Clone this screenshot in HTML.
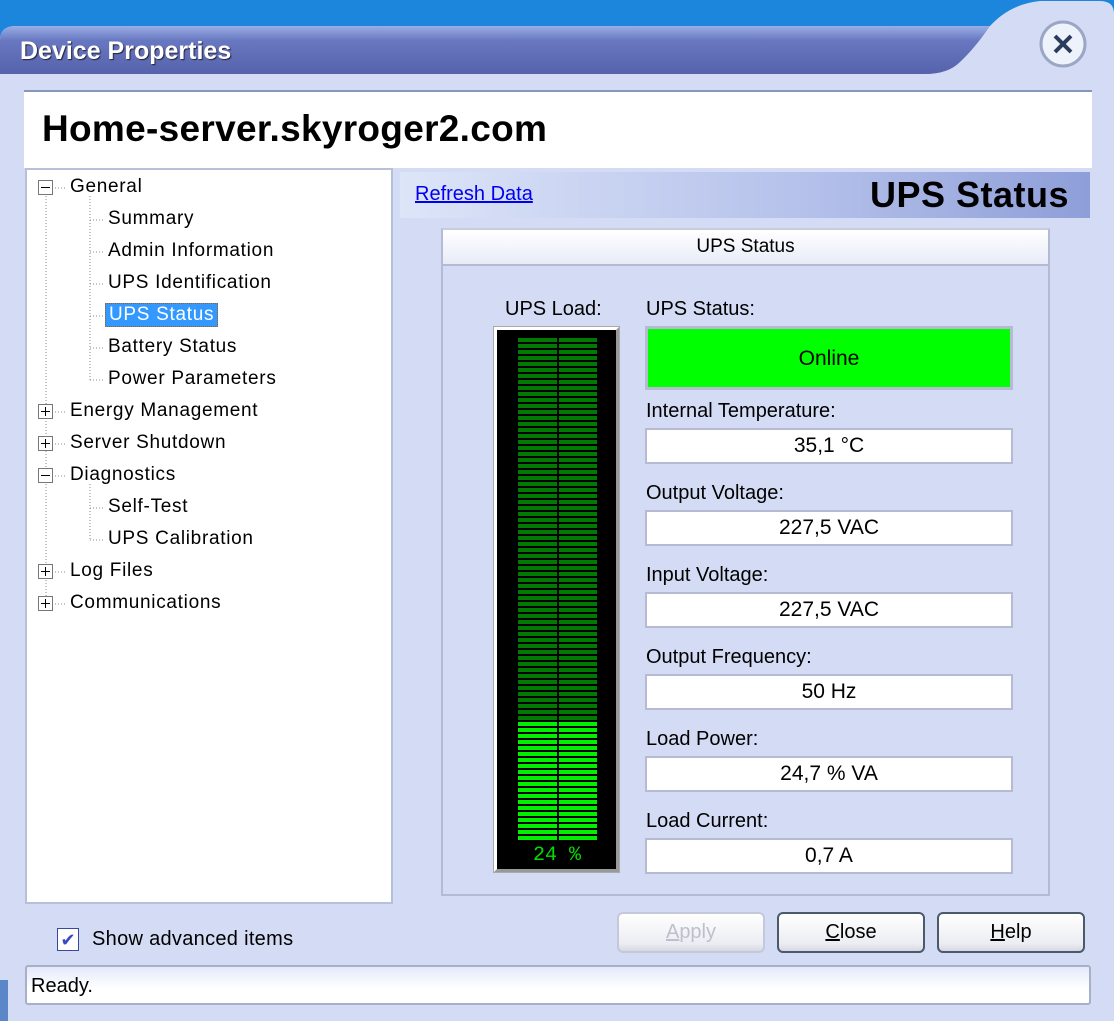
<!DOCTYPE html>
<html><head><meta charset="utf-8"><style>
*{margin:0;padding:0;box-sizing:border-box}
body{width:1114px;height:1021px;overflow:hidden;background:#1b86dc;font-family:"Liberation Sans",sans-serif;position:relative}
.a{position:absolute}
.box{position:absolute;left:645px;width:368px;height:36px;background:#fff;border:2px solid #b7bad3;text-align:center;font-size:21px;line-height:32px}
.lbl{position:absolute;left:646px;font-size:20px}
.tree div{position:absolute;font-size:19px;white-space:nowrap;letter-spacing:.7px}
.btn{position:absolute;top:912px;width:148px;height:41px;border:2px solid #4a5a6a;border-radius:6px;background:linear-gradient(#fff,#ecedf3 80%,#d6d8e2);text-align:center;font-size:20px;line-height:37px}
</style></head><body>
<svg class="a" style="left:0;top:0" width="1114" height="1021">
<defs><linearGradient id="tb" x1="0" y1="0" x2="0" y2="1"><stop offset="0" stop-color="#9aaee6"/><stop offset=".3" stop-color="#6878c0"/><stop offset="1" stop-color="#5662ac"/></linearGradient>
<linearGradient id="lg" x1="0" x2="1"><stop offset="0" stop-color="#3aa83a"/><stop offset=".5" stop-color="#5cbf4c"/><stop offset="1" stop-color="#777"/></linearGradient></defs>
<path d="M0 40 Q0 26 16 26 L990 26 Q1010 4 1040 1 L1100 1 Q1114 1 1114 14 L1114 1021 L0 1021Z" fill="#d4dcf5"/>
<path d="M0 40 Q0 26 16 26 L990 26 Q975 48 960 62 Q948 74 925 74 L0 74Z" fill="url(#tb)"/>
<circle cx="1063" cy="44" r="22" fill="#eef2fb" stroke="#9aa6c4" stroke-width="3"/>
<path d="M1055 36 L1071 52 M1071 36 L1055 52" stroke="#2a3c5c" stroke-width="4"/>
<path d="M947 134 Q1000 102 1065 113 L1080 122 L1068 130 Q1010 112 960 142Z" fill="url(#lg)"/>
</svg>
<div class="a" style="left:20px;top:37px;font-size:25px;font-weight:bold;color:#fff;text-shadow:1px 1px 1px #223">Device Properties</div>
<div class="a" style="left:24px;top:90px;width:1068px;height:78px;background:#fff;border-top:2px solid #8a96b8"></div>
<div class="a" style="left:42px;top:108px;font-size:37px;font-weight:bold;letter-spacing:.3px">Home-server.skyroger2.com</div>
<div class="a" style="left:25px;top:168px;width:368px;height:736px;background:#fff;border:2px solid #b7bfd9"></div>
<div class="tree">
<svg class="a" style="left:0;top:0" width="400" height="620">
<g stroke="#888" stroke-dasharray="1 2" fill="none">
<path d="M46 196 V604 M90 196 V380 M90 484 V540"/>
<path d="M52 188 H66 M90 220 H104 M90 252 H104 M90 284 H104 M90 316 H104 M90 348 H104 M90 380 H104 M52 412 H66 M52 444 H66 M52 476 H66 M90 508 H104 M90 540 H104 M52 572 H66 M52 604 H66"/>
</g>
<g fill="#fff" stroke="#777"><rect x="38.5" y="180.5" width="14" height="14"/><rect x="38.5" y="404.5" width="14" height="14"/><rect x="38.5" y="436.5" width="14" height="14"/><rect x="38.5" y="468.5" width="14" height="14"/><rect x="38.5" y="564.5" width="14" height="14"/><rect x="38.5" y="596.5" width="14" height="14"/></g>
<g stroke="#000"><path d="M41 187.5H50M41 411.5H50M45.5 407V416M41 443.5H50M45.5 439V448M41 475.5H50M41 571.5H50M45.5 567V576M41 603.5H50M45.5 599V608"/></g>
</svg>
<div style="left:70px;top:176px">General</div>
<div style="left:108px;top:208px">Summary</div>
<div style="left:108px;top:240px">Admin Information</div>
<div style="left:108px;top:272px">UPS Identification</div>
<div style="left:105px;top:303px;background:#3399ff;color:#fff;padding:0 3px;border:1px dotted #a06010">UPS Status</div>
<div style="left:108px;top:336px">Battery Status</div>
<div style="left:108px;top:368px">Power Parameters</div>
<div style="left:70px;top:400px">Energy Management</div>
<div style="left:70px;top:432px">Server Shutdown</div>
<div style="left:70px;top:464px">Diagnostics</div>
<div style="left:108px;top:496px">Self-Test</div>
<div style="left:108px;top:528px">UPS Calibration</div>
<div style="left:70px;top:560px">Log Files</div>
<div style="left:70px;top:592px">Communications</div>
</div>
<div class="a" style="left:400px;top:172px;width:690px;height:46px;background:linear-gradient(90deg,#dde5f8,#b4c0ea 60%,#8e9ed8)"></div>
<div class="a" style="left:415px;top:183px;font-size:20px;color:#0000ee;text-decoration:underline">Refresh Data</div>
<div class="a" style="left:870px;top:174px;font-size:36px;font-weight:bold;letter-spacing:.5px">UPS Status</div>
<div class="a" style="left:441px;top:228px;width:609px;height:668px;border:2px solid #b7bad3;border-top-color:#c8cce0"></div>
<div class="a" style="left:443px;top:230px;width:605px;height:36px;background:linear-gradient(#fff,#e8ecf8);border-bottom:2px solid #b7bad3;text-align:center;font-size:19px;line-height:34px">UPS Status</div>
<div class="lbl" style="left:505px;top:298px">UPS Load:</div>
<div class="a" style="left:494px;top:327px;width:125px;height:545px;background:#000;border:3px solid #fff;border-right-color:#999;border-bottom-color:#999;box-shadow:0 0 0 1px #aaa"></div>
<div class="a" style="left:518px;top:338px;width:39px;height:384px;background:repeating-linear-gradient(#007a00 0 4px,#000 4px 6px)"></div>
<div class="a" style="left:559px;top:338px;width:38px;height:384px;background:repeating-linear-gradient(#007a00 0 4px,#000 4px 6px)"></div>
<div class="a" style="left:518px;top:722px;width:39px;height:120px;background:repeating-linear-gradient(#00f000 0 4px,#000 4px 6px)"></div>
<div class="a" style="left:559px;top:722px;width:38px;height:120px;background:repeating-linear-gradient(#00f000 0 4px,#000 4px 6px)"></div>
<div class="a" style="left:497px;top:844px;width:120px;text-align:center;font-family:'Liberation Mono',monospace;font-size:20px;color:#00e000">24 %</div>
<div class="lbl" style="top:298px">UPS Status:</div>
<div class="box" style="top:326px;height:64px;background:#00ff00;line-height:60px;border-width:3px">Online</div>
<div class="lbl" style="top:400px">Internal Temperature:</div>
<div class="box" style="top:428px">35,1 °C</div>
<div class="lbl" style="top:482px">Output Voltage:</div>
<div class="box" style="top:510px">227,5 VAC</div>
<div class="lbl" style="top:564px">Input Voltage:</div>
<div class="box" style="top:592px">227,5 VAC</div>
<div class="lbl" style="top:646px">Output Frequency:</div>
<div class="box" style="top:674px">50 Hz</div>
<div class="lbl" style="top:728px">Load Power:</div>
<div class="box" style="top:756px">24,7 % VA</div>
<div class="lbl" style="top:810px">Load Current:</div>
<div class="box" style="top:838px">0,7 A</div>
<div class="a" style="left:57px;top:928px;width:22px;height:23px;background:#fff;border:1px solid #3a4a9a;color:#3a4ac0;font-size:18px;text-align:center;line-height:22px">✔</div>
<div class="a" style="left:92px;top:928px;font-size:20px;letter-spacing:.3px">Show advanced items</div>
<div class="btn" style="left:617px;border-color:#c4c8d8;color:#bcc0cc"><u>A</u>pply</div>
<div class="btn" style="left:777px"><u>C</u>lose</div>
<div class="btn" style="left:937px"><u>H</u>elp</div>
<div class="a" style="left:25px;top:965px;width:1066px;height:40px;border:2px solid #a8b0c8;border-radius:3px;background:linear-gradient(#e2e9fa,#fff 60%)"></div>
<div class="a" style="left:31px;top:975px;font-size:20px">Ready.</div>
<div class="a" style="left:0;top:980px;width:8px;height:41px;background:#5b86c8"></div>
</body></html>
